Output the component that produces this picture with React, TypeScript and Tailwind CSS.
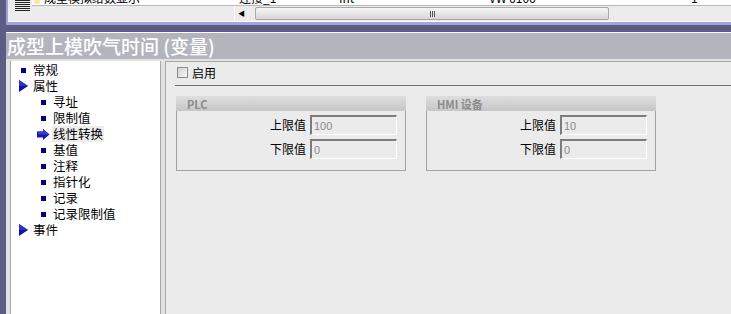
import React from 'react';

const cjk = { fontFamily: '"Noto Sans CJK SC", "Liberation Sans", sans-serif' };

type TreeItem = { label: string; level: 0 | 1; icon: 'square' | 'tri' | 'arrow'; active?: boolean };

const tree: TreeItem[] = [
  { label: '常规', level: 0, icon: 'square' },
  { label: '属性', level: 0, icon: 'tri' },
  { label: '寻址', level: 1, icon: 'square' },
  { label: '限制值', level: 1, icon: 'square' },
  { label: '线性转换', level: 1, icon: 'arrow', active: true },
  { label: '基值', level: 1, icon: 'square' },
  { label: '注释', level: 1, icon: 'square' },
  { label: '指针化', level: 1, icon: 'square' },
  { label: '记录', level: 1, icon: 'square' },
  { label: '记录限制值', level: 1, icon: 'square' },
  { label: '事件', level: 0, icon: 'tri' },
];

function TreeIcon({ icon }: { icon: TreeItem['icon'] }) {
  if (icon === 'square') {
    return <span className="block h-[5px] w-[5px] bg-[#000080]" />;
  }
  if (icon === 'tri') {
    return (
      <svg width="9" height="12" viewBox="0 0 9 12">
        <path d="M0 0 L9 6 L0 12 Z" fill="#1010a8" />
        <path d="M0 0 L9 6 L0 6 Z" fill="#3030c8" />
      </svg>
    );
  }
  return (
    <svg width="13" height="11" viewBox="0 0 13 11">
      <path d="M0 2.5 L6 2.5 L6 0 L12.5 5.5 L6 11 L6 8.5 L0 8.5 Z" fill="#1818b0" />
      <path d="M1 2.5 L6 2.5 L6 0 L12.5 5.5 L1 5.5 Z" fill="#3a3ad0" />
    </svg>
  );
}

function Field({ label, value }: { label: string; value: string }) {
  return (
    <div className="flex h-[20px] items-center justify-end gap-[4px]">
      <span className="text-[12px] leading-[16px] text-black" style={cjk}>
        {label}
      </span>
      <div className="flex h-[20px] w-[87px] items-center border-t-2 border-l-2 border-b border-r border-t-[#7c7c7c] border-l-[#7c7c7c] border-b-white border-r-white bg-[#ebebeb] pl-[2px] text-[11px] leading-[14px] text-[#8a8a8a] font-['Liberation_Sans']">
        {value}
      </div>
    </div>
  );
}

function Group({ title, upper, lower }: { title: string; upper: string; lower: string }) {
  return (
    <div className="flex h-[75px] w-[230px] flex-col">
      <div className="flex h-[15px] items-center bg-gradient-to-b from-[#dedede] to-[#c6c6c6] pl-[11px] text-[11px] leading-[14px] font-bold text-[#8c8c8c]" style={cjk}>
        {title}
      </div>
      <div className="flex flex-1 flex-col gap-[4px] border border-t-0 border-[#a4a4a4] pt-[4px] pr-[8px]">
        <Field label="上限值" value={upper} />
        <Field label="下限值" value={lower} />
      </div>
    </div>
  );
}

export default function App() {
  return (
    <div className="flex h-[314px] w-[731px] flex-col overflow-hidden bg-[#5c5c84]" style={cjk}>
      {/* top strip: table bottom + scrollbar */}
      <div className="ml-[6px] flex h-[25px] border-b-[3px] border-l-2 border-[#a4a4dc]">
        <div className="flex flex-1 border-b border-white bg-[#ececec]">
          <div className="flex w-[24px] flex-col gap-[1px] pl-[7px] pt-0">
            {[0, 1, 2, 3, 4, 5].map((i) => (
              <span key={i} className="block h-[1px] w-[15px] bg-[#222]" />
            ))}
          </div>
          <div className="flex flex-1 flex-col">
            <div className="h-[6px] overflow-hidden border-b border-[#b8b8b8] bg-white">
              <div className="-mt-[9px] flex h-[14px] items-center text-[12px] leading-[14px] text-black">
                <span className="ml-[2px] mr-[4px] block h-[12px] w-[6px] bg-[#f4eab0]" />
                <span className="w-[195px]">成型模拟给数显示</span>
                <span className="w-[100px]">连接_1</span>
                <span className="w-[150px]">Int</span>
                <span className="w-[202px]">VW 6106</span>
                <span>1</span>
              </div>
            </div>
            <div className="flex flex-1">
              <div className="w-[203px] border-r border-white" />
              <div className="flex flex-1 items-center gap-[3px] pl-[3px]">
                <span className="text-[7px] leading-none text-black">◀</span>
                <div className="ml-[7px] flex h-[13px] w-[354px] items-center justify-center rounded-[2px] border border-[#a8a8a8] bg-gradient-to-b from-[#f6f6f6] to-[#d6d6d6]">
                  <span className="flex gap-[1px]">
                    <span className="block h-[6px] w-[1px] bg-[#555]" />
                    <span className="block h-[6px] w-[1px] bg-[#555]" />
                    <span className="block h-[6px] w-[1px] bg-[#555]" />
                  </span>
                </div>
              </div>
            </div>
          </div>
        </div>
      </div>
      {/* dark band */}
      <div className="h-[7px]" />
      {/* title bar */}
      <div className="ml-[6px] flex h-[27px] items-center border-t border-white bg-[#b4b4be] pl-[1px] text-[19px] leading-[24px] font-medium text-white">
        成型上模吹气时间 (变量)
      </div>
      {/* body */}
      <div className="ml-[6px] flex flex-1 bg-[#e2e2e2] pt-[2px] pl-[4px]">
        <div className="w-[151px] border-x border-[#a8a8a8] bg-white pt-[1px]">
          {tree.map((t) => (
            <div key={t.label} className="flex h-[16px] items-center text-[12.5px] leading-[16px] text-black">
              <div className={`flex items-center justify-center ${t.level === 0 ? 'ml-[5px] w-[14px]' : 'ml-[25px] w-[14px]'}`}>
                <TreeIcon icon={t.icon} />
              </div>
              <span className={`ml-[2px] px-[1px] ${t.active ? 'bg-[#ececec]' : ''}`}>{t.label}</span>
            </div>
          ))}
        </div>
        <div className="ml-[4px] flex flex-1 flex-col border-t border-l border-[#a8a8a8] bg-[#ebebeb] pl-[9px]">
          <div className="flex h-[24px] items-center gap-[4px] border-b border-[#707070] pl-[2px] pb-[2px]">
            <span className="block h-[11px] w-[11px] border border-[#8c8c8c] bg-gradient-to-br from-[#d0d0d0] to-[#f8f8f8]" />
            <span className="text-[12px] leading-[16px] text-black">启用</span>
          </div>
          <div className="mt-[10px] flex gap-[20px] pl-[1px]">
            <Group title="PLC" upper="100" lower="0" />
            <Group title="HMI 设备" upper="10" lower="0" />
          </div>
        </div>
      </div>
    </div>
  );
}
